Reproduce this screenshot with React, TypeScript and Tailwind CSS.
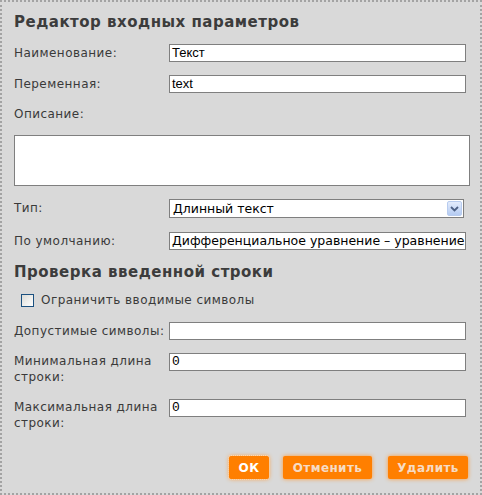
import React from "react";

const labelFont = { fontFamily: '"DejaVu Sans", Verdana, sans-serif' };
const inputFont = { fontFamily: '"Liberation Sans", Arial, sans-serif' };

const Field: React.FC<{ label: React.ReactNode; value?: string; className?: string }> = ({
    label,
    value,
    className,
}) => (
    <div className={"grid grid-cols-[155px_297px] items-start " + (className ?? "")}>
        <div className="text-[12px] leading-[18px] tracking-[0.45px] text-[#3a3a3a]" style={labelFont}>
            {label}
        </div>
        <div
            className="h-[18px] border border-[#7f7f7f] bg-white px-[2px] text-[13px] leading-[16px] text-black overflow-hidden whitespace-nowrap"
            style={inputFont}
        >
            {value}
        </div>
    </div>
);

const TwoLineField: React.FC<{ first: string; second: string; value: string; className?: string }> = ({
    first,
    second,
    value,
    className,
}) => (
    <div className={"grid grid-cols-[155px_297px] items-start " + (className ?? "")}>
        <div className="text-[12px] leading-[16px] tracking-[0.45px] text-[#3a3a3a]" style={labelFont}>
            <div>{first}</div>
            <div>{second}</div>
        </div>
        <div
            className="h-[18px] border border-[#7f7f7f] bg-white px-[2px] text-[13px] leading-[16px] text-black"
            style={{ fontFamily: '"Liberation Mono", "Courier New", monospace' }}
        >
            {value}
        </div>
    </div>
);

export default function App() {
    return (
        <div className="w-[482px] h-[495px] bg-[#d9d9d9] border-2 border-dotted border-[#a3a3a3] pl-[12px] pr-[12px] pt-[10px] flex flex-col">
            <div className="text-[15px] leading-[20px] font-bold tracking-[0.5px] text-[#3c3c3c]" style={labelFont}>
                Редактор входных параметров
            </div>

            <Field className="mt-[12px]" label="Наименование:" value="Текст" />
            <Field className="mt-[13px]" label="Переменная:" value="text" />

            <div className="mt-[12px] text-[12px] leading-[18px] tracking-[0.45px] text-[#3a3a3a]" style={labelFont}>
                Описание:
            </div>
            <div className="mt-[12px] w-[456px] h-[51px] border border-[#7f7f7f] bg-white" />

            <div className="mt-[13px] grid grid-cols-[155px_295px] items-start">
                <div className="text-[12px] leading-[19px] tracking-[0.45px] text-[#3a3a3a]" style={labelFont}>
                    Тип:
                </div>
                <div className="h-[19px] border border-[#7f7f7f] bg-white flex items-center justify-between pl-[3px] pr-[1px]">
                    <span className="text-[12.5px] leading-[17px] text-black" style={labelFont}>
                        Длинный текст
                    </span>
                    <div className="w-[15px] h-[15px] rounded-[2px] border border-[#b8ccef] bg-gradient-to-b from-[#e3ecfc] to-[#b5cbf2] flex items-center justify-center">
                        <svg width="9" height="6" viewBox="0 0 9 6">
                            <path d="M1 1 L4.5 4.5 L8 1" fill="none" stroke="#4d6185" strokeWidth="1.8" />
                        </svg>
                    </div>
                </div>
            </div>

            <div className="mt-[14px] grid grid-cols-[155px_297px] items-start">
                <div className="text-[12px] leading-[18px] tracking-[0.45px] text-[#3a3a3a]" style={labelFont}>
                    По умолчанию:
                </div>
                <div
                    className="h-[18px] border border-[#7f7f7f] bg-white pl-[2px] text-[12.5px] leading-[16px] text-black overflow-hidden whitespace-nowrap"
                    style={labelFont}
                >
                    Дифференциальное уравнение – уравнение, связывающее функцию
                </div>
            </div>

            <div className="mt-[12px] text-[15px] leading-[20px] font-bold tracking-[0.5px] text-[#3c3c3c]" style={labelFont}>
                Проверка введенной строки
            </div>

            <div className="mt-[9px] h-[18px] flex items-center pl-[7px]">
                <div className="w-[13px] h-[13px] border border-[#1c5180] bg-gradient-to-br from-[#dcdcd7] to-white" />
                <span className="ml-[7px] text-[12px] leading-[18px] tracking-[0.45px] text-[#3a3a3a]" style={labelFont}>
                    Ограничить вводимые символы
                </span>
            </div>

            <Field className="mt-[13px]" label="Допустимые символы:" value="" />
            <TwoLineField className="mt-[13px]" first="Минимальная длина" second="строки:" value="0" />
            <TwoLineField className="mt-[14px]" first="Максимальная длина" second="строки:" value="0" />

            <div className="mt-[25px] flex justify-end">
                <button
                    className="w-[40px] h-[23px] bg-[#ff7f00] rounded-[2px] shadow-[0_0_4px_#ff9b3a] outline outline-1 outline-dotted outline-[#ffd9b0] text-[12px] font-bold tracking-[0.4px] text-white"
                    style={labelFont}
                >
                    ОК
                </button>
                <button
                    className="ml-[14px] w-[89px] h-[23px] bg-[#ff7f00] rounded-[2px] shadow-[0_0_4px_#ff9b3a] text-[12px] font-bold tracking-[0.4px] text-[#f6dcc6]"
                    style={labelFont}
                >
                    Отменить
                </button>
                <button
                    className="ml-[16px] w-[80px] h-[23px] bg-[#ff7f00] rounded-[2px] shadow-[0_0_4px_#ff9b3a] text-[12px] font-bold tracking-[0.4px] text-[#f6dcc6]"
                    style={labelFont}
                >
                    Удалить
                </button>
            </div>
        </div>
    );
}
